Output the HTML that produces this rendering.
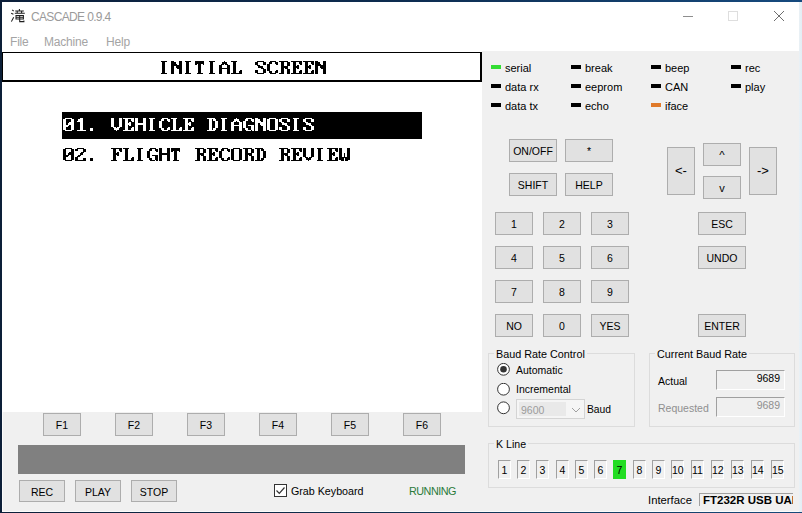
<!DOCTYPE html>
<html><head><meta charset="utf-8">
<style>
*{margin:0;padding:0;box-sizing:border-box}
html,body{width:802px;height:513px;overflow:hidden;background:#fff}
body{position:relative;font-family:"Liberation Sans",sans-serif;font-size:11px;color:#000}
.a{position:absolute}
.t{position:absolute;white-space:nowrap;line-height:13px}
.btn{position:absolute;background:#e1e1e1;border:1px solid #adadad;text-align:center;line-height:21px;padding-top:1px;font-size:10.5px;color:#000}
.led{position:absolute;width:10px;height:4px;background:#000}
.grp{position:absolute;border:1px solid #dcdcdc}
.kb{position:absolute;width:13px;height:19px;border-top:1px solid #a0a0a0;border-left:1px solid #a0a0a0;border-right:1px solid #fff;border-bottom:1px solid #fff;text-align:center;line-height:19px;font-size:10.5px}
</style></head><body>
<!-- window borders -->
<div class="a" style="left:0;top:0;width:802px;height:2px;background:linear-gradient(90deg,#0c1f3a,#0d2c50 50%,#164a7e)"></div>
<div class="a" style="left:0;top:0;width:2px;height:513px;background:#0c1f38"></div>
<div class="a" style="left:0;top:512px;width:802px;height:1px;background:linear-gradient(90deg,#0c1f3a,#10304f 50%,#174a7a)"></div>

<!-- title bar -->
<svg class="a" style="left:11px;top:9px" width="15" height="15" viewBox="0 0 15 15" fill="none" stroke="#1e1e1e" stroke-width="1.05"><path d="M1.2 0.8l1.5 1.4M0.2 4.2l2.2 1.1M0.4 12.6l2.3-4.3M8.4 0v1.8M4.2 1.9h8.6M6.2 2v2.2M10.6 2v2.2M3.8 4.3h10M5 6.5h7.4v3.5H5zM5 8.3h7.4M8.7 6.5v6.1h4.2v-1.2"/></svg>
<div class="t" style="left:31px;top:11px;font-size:12px;letter-spacing:-0.65px;color:#9a9a9a">CASCADE 0.9.4</div>
<div class="a" style="left:683px;top:16px;width:10px;height:1px;background:#8e8e8e"></div>
<div class="a" style="left:728px;top:11px;width:10px;height:10px;border:1px solid #dedede"></div>
<svg class="a" style="left:773px;top:10px" width="12" height="12" viewBox="0 0 12 12"><path d="M1 1L11 11M11 1L1 11" stroke="#6e6e6e" stroke-width="1"/></svg>

<!-- menu -->
<div class="t" style="left:10px;top:36px;font-size:12px;color:#a4a4a4;letter-spacing:-0.2px">File</div>
<div class="t" style="left:44px;top:36px;font-size:12px;color:#a4a4a4;letter-spacing:-0.2px">Machine</div>
<div class="t" style="left:106px;top:36px;font-size:12px;color:#a4a4a4;letter-spacing:-0.2px">Help</div>

<!-- screen -->
<div class="a" style="left:2px;top:52px;width:480px;height:30px;border-top:1px solid #000;border-left:1px solid #000;border-right:2px solid #000;border-bottom:2px solid #000"></div>
<svg class="a" style="left:0;top:0" width="482" height="200" viewBox="0 0 482 200" shape-rendering="crispEdges">
<path fill="#000" d="M160.8 61h6v1.3h-6zM162.3 62.3h3v1.3h-3zM162.3 63.6h3v1.3h-3zM162.3 64.9h3v1.3h-3zM162.3 66.2h3v1.3h-3zM162.3 67.5h3v1.3h-3zM162.3 68.8h3v1.3h-3zM162.3 70.1h3v1.3h-3zM162.3 71.4h3v1.3h-3zM160.8 72.7h6v1.3h-6zM171.3 61h3v1.3h-3zM178.8 61h3v1.3h-3zM171.3 62.3h4.5v1.3h-4.5zM178.8 62.3h3v1.3h-3zM171.3 63.6h6v1.3h-6zM178.8 63.6h3v1.3h-3zM171.3 64.9h10.5v1.3h-10.5zM171.3 66.2h3v1.3h-3zM175.8 66.2h6v1.3h-6zM171.3 67.5h3v1.3h-3zM177.3 67.5h4.5v1.3h-4.5zM171.3 68.8h3v1.3h-3zM178.8 68.8h3v1.3h-3zM171.3 70.1h3v1.3h-3zM178.8 70.1h3v1.3h-3zM171.3 71.4h3v1.3h-3zM178.8 71.4h3v1.3h-3zM171.3 72.7h3v1.3h-3zM178.8 72.7h3v1.3h-3zM184.8 61h6v1.3h-6zM186.3 62.3h3v1.3h-3zM186.3 63.6h3v1.3h-3zM186.3 64.9h3v1.3h-3zM186.3 66.2h3v1.3h-3zM186.3 67.5h3v1.3h-3zM186.3 68.8h3v1.3h-3zM186.3 70.1h3v1.3h-3zM186.3 71.4h3v1.3h-3zM184.8 72.7h6v1.3h-6zM195.3 61h9v1.3h-9zM195.3 62.3h9v1.3h-9zM195.3 63.6h1.5v1.3h-1.5zM198.3 63.6h3v1.3h-3zM202.8 63.6h1.5v1.3h-1.5zM198.3 64.9h3v1.3h-3zM198.3 66.2h3v1.3h-3zM198.3 67.5h3v1.3h-3zM198.3 68.8h3v1.3h-3zM198.3 70.1h3v1.3h-3zM198.3 71.4h3v1.3h-3zM196.8 72.7h6v1.3h-6zM208.8 61h6v1.3h-6zM210.3 62.3h3v1.3h-3zM210.3 63.6h3v1.3h-3zM210.3 64.9h3v1.3h-3zM210.3 66.2h3v1.3h-3zM210.3 67.5h3v1.3h-3zM210.3 68.8h3v1.3h-3zM210.3 70.1h3v1.3h-3zM210.3 71.4h3v1.3h-3zM208.8 72.7h6v1.3h-6zM223.8 61h1.5v1.3h-1.5zM222.3 62.3h4.5v1.3h-4.5zM220.8 63.6h3v1.3h-3zM225.3 63.6h3v1.3h-3zM219.3 64.9h3v1.3h-3zM226.8 64.9h3v1.3h-3zM219.3 66.2h3v1.3h-3zM226.8 66.2h3v1.3h-3zM219.3 67.5h10.5v1.3h-10.5zM219.3 68.8h3v1.3h-3zM226.8 68.8h3v1.3h-3zM219.3 70.1h3v1.3h-3zM226.8 70.1h3v1.3h-3zM219.3 71.4h3v1.3h-3zM226.8 71.4h3v1.3h-3zM219.3 72.7h3v1.3h-3zM226.8 72.7h3v1.3h-3zM231.3 61h6v1.3h-6zM232.8 62.3h3v1.3h-3zM232.8 63.6h3v1.3h-3zM232.8 64.9h3v1.3h-3zM232.8 66.2h3v1.3h-3zM232.8 67.5h3v1.3h-3zM232.8 68.8h3v1.3h-3zM232.8 70.1h3v1.3h-3zM240.3 70.1h1.5v1.3h-1.5zM232.8 71.4h3v1.3h-3zM238.8 71.4h3v1.3h-3zM231.3 72.7h10.5v1.3h-10.5zM256.8 61h7.5v1.3h-7.5zM255.3 62.3h3v1.3h-3zM262.8 62.3h3v1.3h-3zM255.3 63.6h3v1.3h-3zM262.8 63.6h3v1.3h-3zM256.8 64.9h3v1.3h-3zM258.3 66.2h4.5v1.3h-4.5zM261.3 67.5h3v1.3h-3zM262.8 68.8h3v1.3h-3zM255.3 70.1h3v1.3h-3zM262.8 70.1h3v1.3h-3zM255.3 71.4h3v1.3h-3zM262.8 71.4h3v1.3h-3zM256.8 72.7h7.5v1.3h-7.5zM270.3 61h6v1.3h-6zM268.8 62.3h3v1.3h-3zM274.8 62.3h3v1.3h-3zM267.3 63.6h3v1.3h-3zM276.3 63.6h1.5v1.3h-1.5zM267.3 64.9h3v1.3h-3zM267.3 66.2h3v1.3h-3zM267.3 67.5h3v1.3h-3zM267.3 68.8h3v1.3h-3zM267.3 70.1h3v1.3h-3zM276.3 70.1h1.5v1.3h-1.5zM268.8 71.4h3v1.3h-3zM274.8 71.4h3v1.3h-3zM270.3 72.7h6v1.3h-6zM279.3 61h9v1.3h-9zM280.8 62.3h3v1.3h-3zM286.8 62.3h3v1.3h-3zM280.8 63.6h3v1.3h-3zM286.8 63.6h3v1.3h-3zM280.8 64.9h3v1.3h-3zM286.8 64.9h3v1.3h-3zM280.8 66.2h7.5v1.3h-7.5zM280.8 67.5h3v1.3h-3zM285.3 67.5h3v1.3h-3zM280.8 68.8h3v1.3h-3zM286.8 68.8h3v1.3h-3zM280.8 70.1h3v1.3h-3zM286.8 70.1h3v1.3h-3zM280.8 71.4h3v1.3h-3zM286.8 71.4h3v1.3h-3zM279.3 72.7h4.5v1.3h-4.5zM286.8 72.7h3v1.3h-3zM291.3 61h10.5v1.3h-10.5zM292.8 62.3h3v1.3h-3zM298.8 62.3h3v1.3h-3zM292.8 63.6h3v1.3h-3zM300.3 63.6h1.5v1.3h-1.5zM292.8 64.9h3v1.3h-3zM297.3 64.9h1.5v1.3h-1.5zM292.8 66.2h6v1.3h-6zM292.8 67.5h3v1.3h-3zM297.3 67.5h1.5v1.3h-1.5zM292.8 68.8h3v1.3h-3zM292.8 70.1h3v1.3h-3zM300.3 70.1h1.5v1.3h-1.5zM292.8 71.4h3v1.3h-3zM298.8 71.4h3v1.3h-3zM291.3 72.7h10.5v1.3h-10.5zM303.3 61h10.5v1.3h-10.5zM304.8 62.3h3v1.3h-3zM310.8 62.3h3v1.3h-3zM304.8 63.6h3v1.3h-3zM312.3 63.6h1.5v1.3h-1.5zM304.8 64.9h3v1.3h-3zM309.3 64.9h1.5v1.3h-1.5zM304.8 66.2h6v1.3h-6zM304.8 67.5h3v1.3h-3zM309.3 67.5h1.5v1.3h-1.5zM304.8 68.8h3v1.3h-3zM304.8 70.1h3v1.3h-3zM312.3 70.1h1.5v1.3h-1.5zM304.8 71.4h3v1.3h-3zM310.8 71.4h3v1.3h-3zM303.3 72.7h10.5v1.3h-10.5zM315.3 61h3v1.3h-3zM322.8 61h3v1.3h-3zM315.3 62.3h4.5v1.3h-4.5zM322.8 62.3h3v1.3h-3zM315.3 63.6h6v1.3h-6zM322.8 63.6h3v1.3h-3zM315.3 64.9h10.5v1.3h-10.5zM315.3 66.2h3v1.3h-3zM319.8 66.2h6v1.3h-6zM315.3 67.5h3v1.3h-3zM321.3 67.5h4.5v1.3h-4.5zM315.3 68.8h3v1.3h-3zM322.8 68.8h3v1.3h-3zM315.3 70.1h3v1.3h-3zM322.8 70.1h3v1.3h-3zM315.3 71.4h3v1.3h-3zM322.8 71.4h3v1.3h-3zM315.3 72.7h3v1.3h-3zM322.8 72.7h3v1.3h-3z"/>
<rect x="62" y="112" width="360" height="27" fill="#000"/>
<path fill="#fff" d="M64.8 118h7.5v1.3h-7.5zM63.3 119.3h3v1.3h-3zM70.8 119.3h3v1.3h-3zM63.3 120.6h3v1.3h-3zM70.8 120.6h3v1.3h-3zM63.3 121.9h3v1.3h-3zM69.3 121.9h4.5v1.3h-4.5zM63.3 123.2h3v1.3h-3zM67.8 123.2h6v1.3h-6zM63.3 124.5h6v1.3h-6zM70.8 124.5h3v1.3h-3zM63.3 125.8h4.5v1.3h-4.5zM70.8 125.8h3v1.3h-3zM63.3 127.1h3v1.3h-3zM70.8 127.1h3v1.3h-3zM63.3 128.4h3v1.3h-3zM70.8 128.4h3v1.3h-3zM64.8 129.7h7.5v1.3h-7.5zM79.8 118h3v1.3h-3zM78.3 119.3h4.5v1.3h-4.5zM76.8 120.6h6v1.3h-6zM79.8 121.9h3v1.3h-3zM79.8 123.2h3v1.3h-3zM79.8 124.5h3v1.3h-3zM79.8 125.8h3v1.3h-3zM79.8 127.1h3v1.3h-3zM79.8 128.4h3v1.3h-3zM76.8 129.7h9v1.3h-9zM90.3 128.4h3v1.3h-3zM90.3 129.7h3v1.3h-3zM111.3 118h3v1.3h-3zM118.8 118h3v1.3h-3zM111.3 119.3h3v1.3h-3zM118.8 119.3h3v1.3h-3zM111.3 120.6h3v1.3h-3zM118.8 120.6h3v1.3h-3zM111.3 121.9h3v1.3h-3zM118.8 121.9h3v1.3h-3zM111.3 123.2h3v1.3h-3zM118.8 123.2h3v1.3h-3zM111.3 124.5h3v1.3h-3zM118.8 124.5h3v1.3h-3zM111.3 125.8h3v1.3h-3zM118.8 125.8h3v1.3h-3zM112.8 127.1h3v1.3h-3zM117.3 127.1h3v1.3h-3zM114.3 128.4h4.5v1.3h-4.5zM115.8 129.7h1.5v1.3h-1.5zM123.3 118h10.5v1.3h-10.5zM124.8 119.3h3v1.3h-3zM130.8 119.3h3v1.3h-3zM124.8 120.6h3v1.3h-3zM132.3 120.6h1.5v1.3h-1.5zM124.8 121.9h3v1.3h-3zM129.3 121.9h1.5v1.3h-1.5zM124.8 123.2h6v1.3h-6zM124.8 124.5h3v1.3h-3zM129.3 124.5h1.5v1.3h-1.5zM124.8 125.8h3v1.3h-3zM124.8 127.1h3v1.3h-3zM132.3 127.1h1.5v1.3h-1.5zM124.8 128.4h3v1.3h-3zM130.8 128.4h3v1.3h-3zM123.3 129.7h10.5v1.3h-10.5zM135.3 118h3v1.3h-3zM142.8 118h3v1.3h-3zM135.3 119.3h3v1.3h-3zM142.8 119.3h3v1.3h-3zM135.3 120.6h3v1.3h-3zM142.8 120.6h3v1.3h-3zM135.3 121.9h3v1.3h-3zM142.8 121.9h3v1.3h-3zM135.3 123.2h10.5v1.3h-10.5zM135.3 124.5h3v1.3h-3zM142.8 124.5h3v1.3h-3zM135.3 125.8h3v1.3h-3zM142.8 125.8h3v1.3h-3zM135.3 127.1h3v1.3h-3zM142.8 127.1h3v1.3h-3zM135.3 128.4h3v1.3h-3zM142.8 128.4h3v1.3h-3zM135.3 129.7h3v1.3h-3zM142.8 129.7h3v1.3h-3zM148.8 118h6v1.3h-6zM150.3 119.3h3v1.3h-3zM150.3 120.6h3v1.3h-3zM150.3 121.9h3v1.3h-3zM150.3 123.2h3v1.3h-3zM150.3 124.5h3v1.3h-3zM150.3 125.8h3v1.3h-3zM150.3 127.1h3v1.3h-3zM150.3 128.4h3v1.3h-3zM148.8 129.7h6v1.3h-6zM162.3 118h6v1.3h-6zM160.8 119.3h3v1.3h-3zM166.8 119.3h3v1.3h-3zM159.3 120.6h3v1.3h-3zM168.3 120.6h1.5v1.3h-1.5zM159.3 121.9h3v1.3h-3zM159.3 123.2h3v1.3h-3zM159.3 124.5h3v1.3h-3zM159.3 125.8h3v1.3h-3zM159.3 127.1h3v1.3h-3zM168.3 127.1h1.5v1.3h-1.5zM160.8 128.4h3v1.3h-3zM166.8 128.4h3v1.3h-3zM162.3 129.7h6v1.3h-6zM171.3 118h6v1.3h-6zM172.8 119.3h3v1.3h-3zM172.8 120.6h3v1.3h-3zM172.8 121.9h3v1.3h-3zM172.8 123.2h3v1.3h-3zM172.8 124.5h3v1.3h-3zM172.8 125.8h3v1.3h-3zM172.8 127.1h3v1.3h-3zM180.3 127.1h1.5v1.3h-1.5zM172.8 128.4h3v1.3h-3zM178.8 128.4h3v1.3h-3zM171.3 129.7h10.5v1.3h-10.5zM183.3 118h10.5v1.3h-10.5zM184.8 119.3h3v1.3h-3zM190.8 119.3h3v1.3h-3zM184.8 120.6h3v1.3h-3zM192.3 120.6h1.5v1.3h-1.5zM184.8 121.9h3v1.3h-3zM189.3 121.9h1.5v1.3h-1.5zM184.8 123.2h6v1.3h-6zM184.8 124.5h3v1.3h-3zM189.3 124.5h1.5v1.3h-1.5zM184.8 125.8h3v1.3h-3zM184.8 127.1h3v1.3h-3zM192.3 127.1h1.5v1.3h-1.5zM184.8 128.4h3v1.3h-3zM190.8 128.4h3v1.3h-3zM183.3 129.7h10.5v1.3h-10.5zM207.3 118h7.5v1.3h-7.5zM208.8 119.3h3v1.3h-3zM213.3 119.3h3v1.3h-3zM208.8 120.6h3v1.3h-3zM214.8 120.6h3v1.3h-3zM208.8 121.9h3v1.3h-3zM214.8 121.9h3v1.3h-3zM208.8 123.2h3v1.3h-3zM214.8 123.2h3v1.3h-3zM208.8 124.5h3v1.3h-3zM214.8 124.5h3v1.3h-3zM208.8 125.8h3v1.3h-3zM214.8 125.8h3v1.3h-3zM208.8 127.1h3v1.3h-3zM214.8 127.1h3v1.3h-3zM208.8 128.4h3v1.3h-3zM213.3 128.4h3v1.3h-3zM207.3 129.7h7.5v1.3h-7.5zM220.8 118h6v1.3h-6zM222.3 119.3h3v1.3h-3zM222.3 120.6h3v1.3h-3zM222.3 121.9h3v1.3h-3zM222.3 123.2h3v1.3h-3zM222.3 124.5h3v1.3h-3zM222.3 125.8h3v1.3h-3zM222.3 127.1h3v1.3h-3zM222.3 128.4h3v1.3h-3zM220.8 129.7h6v1.3h-6zM235.8 118h1.5v1.3h-1.5zM234.3 119.3h4.5v1.3h-4.5zM232.8 120.6h3v1.3h-3zM237.3 120.6h3v1.3h-3zM231.3 121.9h3v1.3h-3zM238.8 121.9h3v1.3h-3zM231.3 123.2h3v1.3h-3zM238.8 123.2h3v1.3h-3zM231.3 124.5h10.5v1.3h-10.5zM231.3 125.8h3v1.3h-3zM238.8 125.8h3v1.3h-3zM231.3 127.1h3v1.3h-3zM238.8 127.1h3v1.3h-3zM231.3 128.4h3v1.3h-3zM238.8 128.4h3v1.3h-3zM231.3 129.7h3v1.3h-3zM238.8 129.7h3v1.3h-3zM246.3 118h6v1.3h-6zM244.8 119.3h3v1.3h-3zM250.8 119.3h3v1.3h-3zM243.3 120.6h3v1.3h-3zM252.3 120.6h1.5v1.3h-1.5zM243.3 121.9h3v1.3h-3zM243.3 123.2h3v1.3h-3zM243.3 124.5h3v1.3h-3zM247.8 124.5h6v1.3h-6zM243.3 125.8h3v1.3h-3zM250.8 125.8h3v1.3h-3zM243.3 127.1h3v1.3h-3zM250.8 127.1h3v1.3h-3zM244.8 128.4h3v1.3h-3zM250.8 128.4h3v1.3h-3zM246.3 129.7h4.5v1.3h-4.5zM252.3 129.7h1.5v1.3h-1.5zM255.3 118h3v1.3h-3zM262.8 118h3v1.3h-3zM255.3 119.3h4.5v1.3h-4.5zM262.8 119.3h3v1.3h-3zM255.3 120.6h6v1.3h-6zM262.8 120.6h3v1.3h-3zM255.3 121.9h10.5v1.3h-10.5zM255.3 123.2h3v1.3h-3zM259.8 123.2h6v1.3h-6zM255.3 124.5h3v1.3h-3zM261.3 124.5h4.5v1.3h-4.5zM255.3 125.8h3v1.3h-3zM262.8 125.8h3v1.3h-3zM255.3 127.1h3v1.3h-3zM262.8 127.1h3v1.3h-3zM255.3 128.4h3v1.3h-3zM262.8 128.4h3v1.3h-3zM255.3 129.7h3v1.3h-3zM262.8 129.7h3v1.3h-3zM268.8 118h7.5v1.3h-7.5zM267.3 119.3h3v1.3h-3zM274.8 119.3h3v1.3h-3zM267.3 120.6h3v1.3h-3zM274.8 120.6h3v1.3h-3zM267.3 121.9h3v1.3h-3zM274.8 121.9h3v1.3h-3zM267.3 123.2h3v1.3h-3zM274.8 123.2h3v1.3h-3zM267.3 124.5h3v1.3h-3zM274.8 124.5h3v1.3h-3zM267.3 125.8h3v1.3h-3zM274.8 125.8h3v1.3h-3zM267.3 127.1h3v1.3h-3zM274.8 127.1h3v1.3h-3zM267.3 128.4h3v1.3h-3zM274.8 128.4h3v1.3h-3zM268.8 129.7h7.5v1.3h-7.5zM280.8 118h7.5v1.3h-7.5zM279.3 119.3h3v1.3h-3zM286.8 119.3h3v1.3h-3zM279.3 120.6h3v1.3h-3zM286.8 120.6h3v1.3h-3zM280.8 121.9h3v1.3h-3zM282.3 123.2h4.5v1.3h-4.5zM285.3 124.5h3v1.3h-3zM286.8 125.8h3v1.3h-3zM279.3 127.1h3v1.3h-3zM286.8 127.1h3v1.3h-3zM279.3 128.4h3v1.3h-3zM286.8 128.4h3v1.3h-3zM280.8 129.7h7.5v1.3h-7.5zM292.8 118h6v1.3h-6zM294.3 119.3h3v1.3h-3zM294.3 120.6h3v1.3h-3zM294.3 121.9h3v1.3h-3zM294.3 123.2h3v1.3h-3zM294.3 124.5h3v1.3h-3zM294.3 125.8h3v1.3h-3zM294.3 127.1h3v1.3h-3zM294.3 128.4h3v1.3h-3zM292.8 129.7h6v1.3h-6zM304.8 118h7.5v1.3h-7.5zM303.3 119.3h3v1.3h-3zM310.8 119.3h3v1.3h-3zM303.3 120.6h3v1.3h-3zM310.8 120.6h3v1.3h-3zM304.8 121.9h3v1.3h-3zM306.3 123.2h4.5v1.3h-4.5zM309.3 124.5h3v1.3h-3zM310.8 125.8h3v1.3h-3zM303.3 127.1h3v1.3h-3zM310.8 127.1h3v1.3h-3zM303.3 128.4h3v1.3h-3zM310.8 128.4h3v1.3h-3zM304.8 129.7h7.5v1.3h-7.5z"/>
<path fill="#000" d="M64.8 148h7.5v1.3h-7.5zM63.3 149.3h3v1.3h-3zM70.8 149.3h3v1.3h-3zM63.3 150.6h3v1.3h-3zM70.8 150.6h3v1.3h-3zM63.3 151.9h3v1.3h-3zM69.3 151.9h4.5v1.3h-4.5zM63.3 153.2h3v1.3h-3zM67.8 153.2h6v1.3h-6zM63.3 154.5h6v1.3h-6zM70.8 154.5h3v1.3h-3zM63.3 155.8h4.5v1.3h-4.5zM70.8 155.8h3v1.3h-3zM63.3 157.1h3v1.3h-3zM70.8 157.1h3v1.3h-3zM63.3 158.4h3v1.3h-3zM70.8 158.4h3v1.3h-3zM64.8 159.7h7.5v1.3h-7.5zM76.8 148h7.5v1.3h-7.5zM75.3 149.3h3v1.3h-3zM82.8 149.3h3v1.3h-3zM82.8 150.6h3v1.3h-3zM81.3 151.9h3v1.3h-3zM79.8 153.2h3v1.3h-3zM78.3 154.5h3v1.3h-3zM76.8 155.8h3v1.3h-3zM75.3 157.1h3v1.3h-3zM75.3 158.4h3v1.3h-3zM82.8 158.4h3v1.3h-3zM75.3 159.7h10.5v1.3h-10.5zM90.3 158.4h3v1.3h-3zM90.3 159.7h3v1.3h-3zM111.3 148h10.5v1.3h-10.5zM112.8 149.3h3v1.3h-3zM118.8 149.3h3v1.3h-3zM112.8 150.6h3v1.3h-3zM120.3 150.6h1.5v1.3h-1.5zM112.8 151.9h3v1.3h-3zM117.3 151.9h1.5v1.3h-1.5zM112.8 153.2h6v1.3h-6zM112.8 154.5h3v1.3h-3zM117.3 154.5h1.5v1.3h-1.5zM112.8 155.8h3v1.3h-3zM112.8 157.1h3v1.3h-3zM112.8 158.4h3v1.3h-3zM111.3 159.7h6v1.3h-6zM123.3 148h6v1.3h-6zM124.8 149.3h3v1.3h-3zM124.8 150.6h3v1.3h-3zM124.8 151.9h3v1.3h-3zM124.8 153.2h3v1.3h-3zM124.8 154.5h3v1.3h-3zM124.8 155.8h3v1.3h-3zM124.8 157.1h3v1.3h-3zM132.3 157.1h1.5v1.3h-1.5zM124.8 158.4h3v1.3h-3zM130.8 158.4h3v1.3h-3zM123.3 159.7h10.5v1.3h-10.5zM136.8 148h6v1.3h-6zM138.3 149.3h3v1.3h-3zM138.3 150.6h3v1.3h-3zM138.3 151.9h3v1.3h-3zM138.3 153.2h3v1.3h-3zM138.3 154.5h3v1.3h-3zM138.3 155.8h3v1.3h-3zM138.3 157.1h3v1.3h-3zM138.3 158.4h3v1.3h-3zM136.8 159.7h6v1.3h-6zM150.3 148h6v1.3h-6zM148.8 149.3h3v1.3h-3zM154.8 149.3h3v1.3h-3zM147.3 150.6h3v1.3h-3zM156.3 150.6h1.5v1.3h-1.5zM147.3 151.9h3v1.3h-3zM147.3 153.2h3v1.3h-3zM147.3 154.5h3v1.3h-3zM151.8 154.5h6v1.3h-6zM147.3 155.8h3v1.3h-3zM154.8 155.8h3v1.3h-3zM147.3 157.1h3v1.3h-3zM154.8 157.1h3v1.3h-3zM148.8 158.4h3v1.3h-3zM154.8 158.4h3v1.3h-3zM150.3 159.7h4.5v1.3h-4.5zM156.3 159.7h1.5v1.3h-1.5zM159.3 148h3v1.3h-3zM166.8 148h3v1.3h-3zM159.3 149.3h3v1.3h-3zM166.8 149.3h3v1.3h-3zM159.3 150.6h3v1.3h-3zM166.8 150.6h3v1.3h-3zM159.3 151.9h3v1.3h-3zM166.8 151.9h3v1.3h-3zM159.3 153.2h10.5v1.3h-10.5zM159.3 154.5h3v1.3h-3zM166.8 154.5h3v1.3h-3zM159.3 155.8h3v1.3h-3zM166.8 155.8h3v1.3h-3zM159.3 157.1h3v1.3h-3zM166.8 157.1h3v1.3h-3zM159.3 158.4h3v1.3h-3zM166.8 158.4h3v1.3h-3zM159.3 159.7h3v1.3h-3zM166.8 159.7h3v1.3h-3zM171.3 148h9v1.3h-9zM171.3 149.3h9v1.3h-9zM171.3 150.6h1.5v1.3h-1.5zM174.3 150.6h3v1.3h-3zM178.8 150.6h1.5v1.3h-1.5zM174.3 151.9h3v1.3h-3zM174.3 153.2h3v1.3h-3zM174.3 154.5h3v1.3h-3zM174.3 155.8h3v1.3h-3zM174.3 157.1h3v1.3h-3zM174.3 158.4h3v1.3h-3zM172.8 159.7h6v1.3h-6zM195.3 148h9v1.3h-9zM196.8 149.3h3v1.3h-3zM202.8 149.3h3v1.3h-3zM196.8 150.6h3v1.3h-3zM202.8 150.6h3v1.3h-3zM196.8 151.9h3v1.3h-3zM202.8 151.9h3v1.3h-3zM196.8 153.2h7.5v1.3h-7.5zM196.8 154.5h3v1.3h-3zM201.3 154.5h3v1.3h-3zM196.8 155.8h3v1.3h-3zM202.8 155.8h3v1.3h-3zM196.8 157.1h3v1.3h-3zM202.8 157.1h3v1.3h-3zM196.8 158.4h3v1.3h-3zM202.8 158.4h3v1.3h-3zM195.3 159.7h4.5v1.3h-4.5zM202.8 159.7h3v1.3h-3zM207.3 148h10.5v1.3h-10.5zM208.8 149.3h3v1.3h-3zM214.8 149.3h3v1.3h-3zM208.8 150.6h3v1.3h-3zM216.3 150.6h1.5v1.3h-1.5zM208.8 151.9h3v1.3h-3zM213.3 151.9h1.5v1.3h-1.5zM208.8 153.2h6v1.3h-6zM208.8 154.5h3v1.3h-3zM213.3 154.5h1.5v1.3h-1.5zM208.8 155.8h3v1.3h-3zM208.8 157.1h3v1.3h-3zM216.3 157.1h1.5v1.3h-1.5zM208.8 158.4h3v1.3h-3zM214.8 158.4h3v1.3h-3zM207.3 159.7h10.5v1.3h-10.5zM222.3 148h6v1.3h-6zM220.8 149.3h3v1.3h-3zM226.8 149.3h3v1.3h-3zM219.3 150.6h3v1.3h-3zM228.3 150.6h1.5v1.3h-1.5zM219.3 151.9h3v1.3h-3zM219.3 153.2h3v1.3h-3zM219.3 154.5h3v1.3h-3zM219.3 155.8h3v1.3h-3zM219.3 157.1h3v1.3h-3zM228.3 157.1h1.5v1.3h-1.5zM220.8 158.4h3v1.3h-3zM226.8 158.4h3v1.3h-3zM222.3 159.7h6v1.3h-6zM232.8 148h7.5v1.3h-7.5zM231.3 149.3h3v1.3h-3zM238.8 149.3h3v1.3h-3zM231.3 150.6h3v1.3h-3zM238.8 150.6h3v1.3h-3zM231.3 151.9h3v1.3h-3zM238.8 151.9h3v1.3h-3zM231.3 153.2h3v1.3h-3zM238.8 153.2h3v1.3h-3zM231.3 154.5h3v1.3h-3zM238.8 154.5h3v1.3h-3zM231.3 155.8h3v1.3h-3zM238.8 155.8h3v1.3h-3zM231.3 157.1h3v1.3h-3zM238.8 157.1h3v1.3h-3zM231.3 158.4h3v1.3h-3zM238.8 158.4h3v1.3h-3zM232.8 159.7h7.5v1.3h-7.5zM243.3 148h9v1.3h-9zM244.8 149.3h3v1.3h-3zM250.8 149.3h3v1.3h-3zM244.8 150.6h3v1.3h-3zM250.8 150.6h3v1.3h-3zM244.8 151.9h3v1.3h-3zM250.8 151.9h3v1.3h-3zM244.8 153.2h7.5v1.3h-7.5zM244.8 154.5h3v1.3h-3zM249.3 154.5h3v1.3h-3zM244.8 155.8h3v1.3h-3zM250.8 155.8h3v1.3h-3zM244.8 157.1h3v1.3h-3zM250.8 157.1h3v1.3h-3zM244.8 158.4h3v1.3h-3zM250.8 158.4h3v1.3h-3zM243.3 159.7h4.5v1.3h-4.5zM250.8 159.7h3v1.3h-3zM255.3 148h7.5v1.3h-7.5zM256.8 149.3h3v1.3h-3zM261.3 149.3h3v1.3h-3zM256.8 150.6h3v1.3h-3zM262.8 150.6h3v1.3h-3zM256.8 151.9h3v1.3h-3zM262.8 151.9h3v1.3h-3zM256.8 153.2h3v1.3h-3zM262.8 153.2h3v1.3h-3zM256.8 154.5h3v1.3h-3zM262.8 154.5h3v1.3h-3zM256.8 155.8h3v1.3h-3zM262.8 155.8h3v1.3h-3zM256.8 157.1h3v1.3h-3zM262.8 157.1h3v1.3h-3zM256.8 158.4h3v1.3h-3zM261.3 158.4h3v1.3h-3zM255.3 159.7h7.5v1.3h-7.5zM279.3 148h9v1.3h-9zM280.8 149.3h3v1.3h-3zM286.8 149.3h3v1.3h-3zM280.8 150.6h3v1.3h-3zM286.8 150.6h3v1.3h-3zM280.8 151.9h3v1.3h-3zM286.8 151.9h3v1.3h-3zM280.8 153.2h7.5v1.3h-7.5zM280.8 154.5h3v1.3h-3zM285.3 154.5h3v1.3h-3zM280.8 155.8h3v1.3h-3zM286.8 155.8h3v1.3h-3zM280.8 157.1h3v1.3h-3zM286.8 157.1h3v1.3h-3zM280.8 158.4h3v1.3h-3zM286.8 158.4h3v1.3h-3zM279.3 159.7h4.5v1.3h-4.5zM286.8 159.7h3v1.3h-3zM291.3 148h10.5v1.3h-10.5zM292.8 149.3h3v1.3h-3zM298.8 149.3h3v1.3h-3zM292.8 150.6h3v1.3h-3zM300.3 150.6h1.5v1.3h-1.5zM292.8 151.9h3v1.3h-3zM297.3 151.9h1.5v1.3h-1.5zM292.8 153.2h6v1.3h-6zM292.8 154.5h3v1.3h-3zM297.3 154.5h1.5v1.3h-1.5zM292.8 155.8h3v1.3h-3zM292.8 157.1h3v1.3h-3zM300.3 157.1h1.5v1.3h-1.5zM292.8 158.4h3v1.3h-3zM298.8 158.4h3v1.3h-3zM291.3 159.7h10.5v1.3h-10.5zM303.3 148h3v1.3h-3zM310.8 148h3v1.3h-3zM303.3 149.3h3v1.3h-3zM310.8 149.3h3v1.3h-3zM303.3 150.6h3v1.3h-3zM310.8 150.6h3v1.3h-3zM303.3 151.9h3v1.3h-3zM310.8 151.9h3v1.3h-3zM303.3 153.2h3v1.3h-3zM310.8 153.2h3v1.3h-3zM303.3 154.5h3v1.3h-3zM310.8 154.5h3v1.3h-3zM303.3 155.8h3v1.3h-3zM310.8 155.8h3v1.3h-3zM304.8 157.1h3v1.3h-3zM309.3 157.1h3v1.3h-3zM306.3 158.4h4.5v1.3h-4.5zM307.8 159.7h1.5v1.3h-1.5zM316.8 148h6v1.3h-6zM318.3 149.3h3v1.3h-3zM318.3 150.6h3v1.3h-3zM318.3 151.9h3v1.3h-3zM318.3 153.2h3v1.3h-3zM318.3 154.5h3v1.3h-3zM318.3 155.8h3v1.3h-3zM318.3 157.1h3v1.3h-3zM318.3 158.4h3v1.3h-3zM316.8 159.7h6v1.3h-6zM327.3 148h10.5v1.3h-10.5zM328.8 149.3h3v1.3h-3zM334.8 149.3h3v1.3h-3zM328.8 150.6h3v1.3h-3zM336.3 150.6h1.5v1.3h-1.5zM328.8 151.9h3v1.3h-3zM333.3 151.9h1.5v1.3h-1.5zM328.8 153.2h6v1.3h-6zM328.8 154.5h3v1.3h-3zM333.3 154.5h1.5v1.3h-1.5zM328.8 155.8h3v1.3h-3zM328.8 157.1h3v1.3h-3zM336.3 157.1h1.5v1.3h-1.5zM328.8 158.4h3v1.3h-3zM334.8 158.4h3v1.3h-3zM327.3 159.7h10.5v1.3h-10.5zM339.3 148h3v1.3h-3zM346.8 148h3v1.3h-3zM339.3 149.3h3v1.3h-3zM346.8 149.3h3v1.3h-3zM339.3 150.6h3v1.3h-3zM346.8 150.6h3v1.3h-3zM339.3 151.9h3v1.3h-3zM346.8 151.9h3v1.3h-3zM339.3 153.2h3v1.3h-3zM343.8 153.2h1.5v1.3h-1.5zM346.8 153.2h3v1.3h-3zM339.3 154.5h3v1.3h-3zM343.8 154.5h1.5v1.3h-1.5zM346.8 154.5h3v1.3h-3zM339.3 155.8h3v1.3h-3zM343.8 155.8h1.5v1.3h-1.5zM346.8 155.8h3v1.3h-3zM339.3 157.1h10.5v1.3h-10.5zM339.3 158.4h4.5v1.3h-4.5zM345.3 158.4h4.5v1.3h-4.5zM340.8 159.7h3v1.3h-3zM345.3 159.7h3v1.3h-3z"/>
</svg>

<!-- lower left panel -->
<div class="a" style="left:2px;top:412px;width:480px;height:100px;background:#f0f0f0"></div>
<div class="btn" style="left:43px;top:413px;width:38px;height:23px">F1</div>
<div class="btn" style="left:115px;top:413px;width:38px;height:23px">F2</div>
<div class="btn" style="left:187px;top:413px;width:38px;height:23px">F3</div>
<div class="btn" style="left:259px;top:413px;width:38px;height:23px">F4</div>
<div class="btn" style="left:331px;top:413px;width:38px;height:23px">F5</div>
<div class="btn" style="left:403px;top:413px;width:38px;height:23px">F6</div>
<div class="a" style="left:18px;top:445px;width:447px;height:29px;background:#808080"></div>
<div class="btn" style="left:19px;top:480px;width:46px;height:22px;line-height:20px">REC</div>
<div class="btn" style="left:75px;top:480px;width:46px;height:22px;line-height:20px">PLAY</div>
<div class="btn" style="left:131px;top:480px;width:46px;height:22px;line-height:20px">STOP</div>
<div class="a" style="left:274px;top:484px;width:13px;height:13px;border:1px solid #333;background:#fff"></div>
<svg class="a" style="left:274px;top:484px" width="13" height="13" viewBox="0 0 13 13"><path d="M2.5 6.5l2.8 2.8L10.5 3.5" fill="none" stroke="#333" stroke-width="1.2"/></svg>
<div class="t" style="left:291px;top:485px;font-size:10.7px">Grab Keyboard</div>
<div class="t" style="left:409px;top:485px;font-size:10.8px;letter-spacing:-0.5px;color:#2a7a3a">RUNNING</div>

<!-- right panel -->
<div class="a" style="left:482px;top:51px;width:318px;height:461px;background:#f0f0f0"></div>
<div class="a" style="left:2px;top:511px;width:798px;height:1px;background:#fbfbfb"></div>
<div class="a" style="left:2px;top:412px;width:1px;height:100px;background:#fbfbfb"></div>

<div class="led" style="left:491px;top:65px;background:#33dd33"></div><div class="t" style="left:505px;top:62px;font-size:11px">serial</div>
<div class="led" style="left:491px;top:84px"></div><div class="t" style="left:505px;top:81px;font-size:11px">data rx</div>
<div class="led" style="left:491px;top:103px"></div><div class="t" style="left:505px;top:100px;font-size:11px">data tx</div>
<div class="led" style="left:571px;top:65px"></div><div class="t" style="left:585px;top:62px;font-size:11px">break</div>
<div class="led" style="left:571px;top:84px"></div><div class="t" style="left:585px;top:81px;font-size:11px">eeprom</div>
<div class="led" style="left:571px;top:103px"></div><div class="t" style="left:585px;top:100px;font-size:11px">echo</div>
<div class="led" style="left:651px;top:65px"></div><div class="t" style="left:665px;top:62px;font-size:11px">beep</div>
<div class="led" style="left:651px;top:84px"></div><div class="t" style="left:665px;top:81px;font-size:11px">CAN</div>
<div class="led" style="left:651px;top:103px;background:#e07a2a"></div><div class="t" style="left:665px;top:100px;font-size:11px">iface</div>
<div class="led" style="left:731px;top:65px"></div><div class="t" style="left:745px;top:62px;font-size:11px">rec</div>
<div class="led" style="left:731px;top:84px"></div><div class="t" style="left:745px;top:81px;font-size:11px">play</div>

<div class="btn" style="left:509px;top:139px;width:48px;height:23px">ON/OFF</div>
<div class="btn" style="left:565px;top:139px;width:48px;height:23px">*</div>
<div class="btn" style="left:509px;top:173px;width:48px;height:23px">SHIFT</div>
<div class="btn" style="left:565px;top:173px;width:48px;height:23px">HELP</div>

<div class="btn" style="left:667px;top:147px;width:28px;height:48px;line-height:43px;font-size:13px">&lt;-</div>
<div class="btn" style="left:703px;top:143px;width:38px;height:23px;font-size:11.5px">^</div>
<div class="btn" style="left:703px;top:176px;width:38px;height:23px;font-size:11px">v</div>
<div class="btn" style="left:749px;top:147px;width:28px;height:48px;line-height:43px;font-size:13px">-&gt;</div>

<div class="btn" style="left:495px;top:212px;width:38px;height:23px">1</div>
<div class="btn" style="left:543px;top:212px;width:38px;height:23px">2</div>
<div class="btn" style="left:591px;top:212px;width:38px;height:23px">3</div>
<div class="btn" style="left:495px;top:246px;width:38px;height:23px">4</div>
<div class="btn" style="left:543px;top:246px;width:38px;height:23px">5</div>
<div class="btn" style="left:591px;top:246px;width:38px;height:23px">6</div>
<div class="btn" style="left:495px;top:280px;width:38px;height:23px">7</div>
<div class="btn" style="left:543px;top:280px;width:38px;height:23px">8</div>
<div class="btn" style="left:591px;top:280px;width:38px;height:23px">9</div>
<div class="btn" style="left:495px;top:314px;width:38px;height:23px">NO</div>
<div class="btn" style="left:543px;top:314px;width:38px;height:23px">0</div>
<div class="btn" style="left:591px;top:314px;width:38px;height:23px">YES</div>
<div class="btn" style="left:698px;top:212px;width:48px;height:23px">ESC</div>
<div class="btn" style="left:698px;top:246px;width:48px;height:23px">UNDO</div>
<div class="btn" style="left:698px;top:314px;width:48px;height:23px">ENTER</div>

<!-- baud rate control -->
<div class="grp" style="left:488px;top:353px;width:147px;height:74px"></div>
<div class="t" style="left:494px;top:348px;padding:0 2px;background:#f0f0f0;font-size:10.8px">Baud Rate Control</div>
<svg class="a" style="left:497px;top:363px" width="14" height="14"><circle cx="6.5" cy="6.3" r="5.9" fill="#fff" stroke="#333" stroke-width="1"/><circle cx="6.5" cy="6.3" r="3.3" fill="#333"/></svg>
<div class="t" style="left:516px;top:364px;font-size:10.5px">Automatic</div>
<svg class="a" style="left:497px;top:383px" width="14" height="14"><circle cx="6.5" cy="6.2" r="5.9" fill="#fff" stroke="#333" stroke-width="1"/></svg>
<div class="t" style="left:516px;top:383px;font-size:10.5px">Incremental</div>
<svg class="a" style="left:497px;top:401px" width="14" height="14"><circle cx="6.5" cy="6.8" r="5.9" fill="#fff" stroke="#333" stroke-width="1"/></svg>
<div class="a" style="left:516px;top:399px;width:69px;height:20px;border:1px solid #d4d4d4;background:#f5f5f5"></div>
<div class="a" style="left:519px;top:402px;width:47px;height:14px;background:#e9e9e9"></div>
<div class="t" style="left:521px;top:404px;font-size:10.5px;color:#9c9c9c">9600</div>
<svg class="a" style="left:571px;top:406px" width="10" height="8"><path d="M1 2l4 4 4-4" fill="none" stroke="#a0a0a0" stroke-width="1"/></svg>
<div class="t" style="left:587px;top:403px;font-size:10.3px">Baud</div>

<!-- current baud rate -->
<div class="grp" style="left:649px;top:353px;width:146px;height:74px"></div>
<div class="t" style="left:655px;top:348px;padding:0 2px;background:#f0f0f0;font-size:10.8px">Current Baud Rate</div>
<div class="t" style="left:658px;top:375px;font-size:10.5px">Actual</div>
<div class="a" style="left:716px;top:370px;width:69px;height:20px;border-top:1px solid #a0a0a0;border-left:1px solid #a0a0a0;border-right:1px solid #fff;border-bottom:1px solid #fff"></div>
<div class="t" style="left:716px;top:372px;width:64px;text-align:right;font-size:10.5px">9689</div>
<div class="t" style="left:658px;top:402px;font-size:10.5px;color:#8f8f8f">Requested</div>
<div class="a" style="left:716px;top:397px;width:69px;height:20px;border-top:1px solid #a0a0a0;border-left:1px solid #a0a0a0;border-right:1px solid #fff;border-bottom:1px solid #fff"></div>
<div class="t" style="left:716px;top:399px;width:64px;text-align:right;font-size:10.5px;color:#8f8f8f">9689</div>

<!-- k line -->
<div class="grp" style="left:488px;top:443px;width:307px;height:45px"></div>
<div class="t" style="left:494px;top:438px;padding:0 2px;background:#f0f0f0;font-size:10.6px">K Line</div>
<div class="kb" style="left:498px;top:460px">1</div>
<div class="kb" style="left:517px;top:460px">2</div>
<div class="kb" style="left:536px;top:460px">3</div>
<div class="kb" style="left:556px;top:460px">4</div>
<div class="kb" style="left:575px;top:460px">5</div>
<div class="kb" style="left:594px;top:460px">6</div>
<div class="kb" style="left:613px;top:460px;background:#22dd22;border-color:#22dd22">7</div>
<div class="kb" style="left:633px;top:460px">8</div>
<div class="kb" style="left:652px;top:460px">9</div>
<div class="kb" style="left:671px;top:460px">10</div>
<div class="kb" style="left:691px;top:460px">11</div>
<div class="kb" style="left:711px;top:460px">12</div>
<div class="kb" style="left:731px;top:460px">13</div>
<div class="kb" style="left:751px;top:460px">14</div>
<div class="kb" style="left:771px;top:460px">15</div>

<!-- interface -->
<div class="t" style="left:648px;top:494px;font-size:11.3px">Interface</div>
<div class="a" style="left:699px;top:493px;width:94px;height:13px;border-top:1px solid #a0a0a0;border-left:1px solid #a0a0a0;overflow:hidden"></div>
<div class="a" style="left:700px;top:494px;width:93px;height:12px;overflow:hidden"><div class="t" style="left:3px;top:0px;font-weight:bold;font-size:11.5px">FT232R USB UART</div></div>
<div class="a" style="left:799px;top:2px;width:3px;height:510px;background:linear-gradient(90deg,#eaf1f5,#e2eef6)"></div>
</body></html>
